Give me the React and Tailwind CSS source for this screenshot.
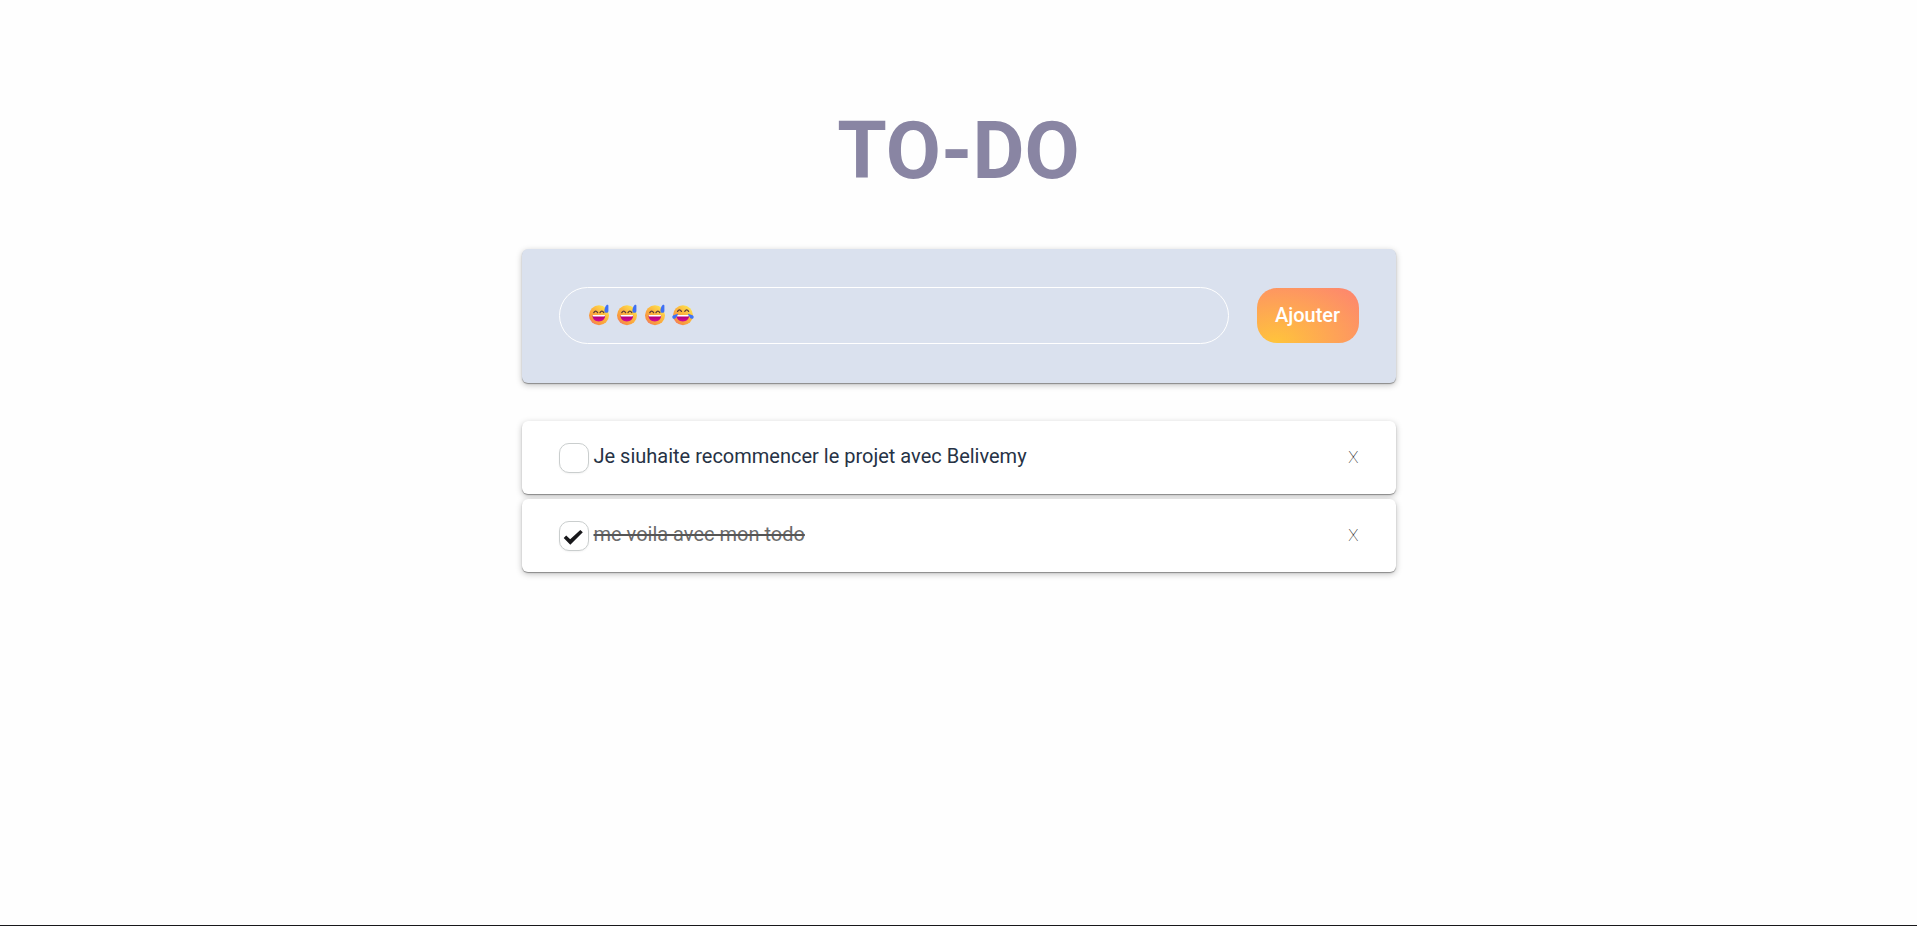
import { useId, useState } from "react";

function Emoji({ joy = false }) {
  const id = useId();
  return (
    <svg viewBox="0 0 22 22" className="h-[22px] w-[22px] shrink-0" aria-hidden="true">
      <defs>
        <linearGradient id={`${id}s`} x1="0.9" y1="0.1" x2="0.15" y2="1">
          <stop offset="0" stopColor="#ffe650" />
          <stop offset="0.4" stopColor="#fcb83f" />
          <stop offset="0.8" stopColor="#f8953f" />
          <stop offset="1" stopColor="#ee6a7c" />
        </linearGradient>
        <linearGradient id={`${id}m`} x1="0" y1="0" x2="0" y2="1">
          <stop offset="0" stopColor="#a8006e" />
          <stop offset="1" stopColor="#d40b98" />
        </linearGradient>
      </defs>
      <circle cx="11" cy="11.2" r="10" fill={`url(#${id}s)`} />
      {joy ? (
        <path d="M5.600 7.400q1.900-3 3.800 0M12.800 7.400q1.900-3 3.800 0" fill="none" stroke="#5b3b38" strokeWidth="1.300" strokeLinecap="round" />
      ) : (
        <path d="M5.800 8.600q1.900-3 3.800 0M12 8.600q1.900-3 3.800 0" fill="none" stroke="#5b3b38" strokeWidth="1.300" strokeLinecap="round" />
      )}
      <path d="M4.500 11.200h12.600c.2 3.600-2.500 6.200-6.300 6.200s-6.500-2.600-6.300-6.200z" fill={`url(#${id}m)`} />
      <path d="M4.600 11h12.400q0 1.500-1 1.500H5.600q-1 0-1-1.500z" fill="#fff" />
      {joy ? (
        <path d="M.7 14.200c-1-1.500 0-2.700 1.500-3.100l3-1.200c.8-.2.9.4.5 1.100l-1.400 2.300c-.9 1.500-2.600 2.100-3.600.9zM21.300 14.200c1-1.500 0-2.700-1.500-3.100l-3-1.200c-.8-.2-.9.4-.5 1.100l1.400 2.300c.9 1.500 2.600 2.100 3.600.9z" fill="#3f74f5" />
      ) : (
        <path d="M18.400 1.200c.9-.7 2-.5 2 .7v5c0 2.500-4 2.500-4 0 0-2 .9-4.600 2-5.700z" fill="#3f70f3" />
      )}
    </svg>
  );
}

function Task({ task, onToggle, onRemove }) {
  const id = useId();
  return (
    <li className="flex h-[73px] items-center rounded-md bg-white px-[37px] pb-[3px] shadow-[0_1px_1px_rgba(0,0,0,0.35),0_2px_6px_rgba(0,0,0,0.25)]">
      <span className="relative mt-1 h-[30px] w-[30px] shrink-0">
        <input
          id={id}
          type="checkbox"
          checked={task.done}
          onChange={onToggle}
          className="block h-[30px] w-[30px] appearance-none rounded-[10px] border border-[#cacece] bg-white shadow-[0_1px_2px_rgba(0,0,0,0.05)]"
        />
        {task.done && (
          <svg viewBox="0 0 30 30" className="pointer-events-none absolute inset-0" aria-hidden="true">
            <path d="M4.700 17l2.500-2.500 4 3.700L21.300 8.900l2.500 2.300L11.300 23.700z" fill="#18181b" />
          </svg>
        )}
      </span>
      <label
        htmlFor={id}
        className={
          task.done
            ? "ml-[5px] flex-1 text-xl text-[#6b6b6b] line-through decoration-[#555555]"
            : "ml-[5px] flex-1 text-xl text-[#263245]"
        }
      >
        {task.text}
      </label>
      <button
        type="button"
        onClick={onRemove}
        aria-label={`X ${task.text}`}
        className="mt-1 font-['Roboto_Thin','Roboto_Light','Roboto',sans-serif] text-[17px] font-thin text-black"
      >
        X
      </button>
    </li>
  );
}

export default function App() {
  const [tasks, setTasks] = useState([
    { id: 1, text: "Je siuhaite recommencer le projet avec Belivemy", done: false },
    { id: 2, text: "me voila avec mon todo", done: true },
  ]);
  const [draft, setDraft] = useState("😅 😅 😅 😂");
  const drawn = draft === "😅 😅 😅 😂";

  const add = (e) => {
    e.preventDefault();
    if (!draft.trim()) return;
    setTasks([...tasks, { id: Date.now(), text: draft, done: false }]);
    setDraft("");
  };

  return (
    <div className="flex min-h-screen flex-col border-b border-[#18181b] bg-[#fefefe] font-['Roboto',sans-serif]">
      <main className="mx-auto w-full max-w-[874px] pt-[91px]">
        <h1 className="text-center text-[80px] leading-[120px] font-bold text-[#8985a3]">TO-DO</h1>
        <form
          onSubmit={add}
          className="mt-[38px] flex h-[134px] items-center gap-7 rounded-md bg-[#dae1ee] px-[37px] pb-[2px] shadow-[0_1px_1px_rgba(0,0,0,0.35),0_2px_6px_rgba(0,0,0,0.25)]"
        >
          <div className="relative flex-1">
            <input
              type="text"
              aria-label="Tâche"
              value={draft}
              onChange={(e) => setDraft(e.target.value)}
              className={
                drawn
                  ? "block h-[57px] w-full rounded-full border border-white bg-transparent px-7 text-xl text-transparent outline-none"
                  : "block h-[57px] w-full rounded-full border border-white bg-transparent px-7 text-xl text-[#263245] outline-none"
              }
            />
            {drawn && (
              <div className="pointer-events-none absolute inset-y-0 left-[29px] flex items-center gap-[6px]">
                <Emoji />
                <Emoji />
                <Emoji />
                <Emoji joy />
              </div>
            )}
          </div>
          <button
            type="submit"
            className="h-[55px] w-[102px] rounded-[20px] bg-[radial-gradient(ellipse_at_18%_100%,#ffc43b,#fd8371)] text-xl font-medium text-white"
          >
            Ajouter
          </button>
        </form>
        <ul className="mt-[38px] flex flex-col gap-[5px]">
          {tasks.map((t) => (
            <Task
              key={t.id}
              task={t}
              onToggle={() => setTasks(tasks.map((o) => (o.id === t.id ? { ...o, done: !o.done } : o)))}
              onRemove={() => setTasks(tasks.filter((o) => o.id !== t.id))}
            />
          ))}
        </ul>
      </main>
    </div>
  );
}
